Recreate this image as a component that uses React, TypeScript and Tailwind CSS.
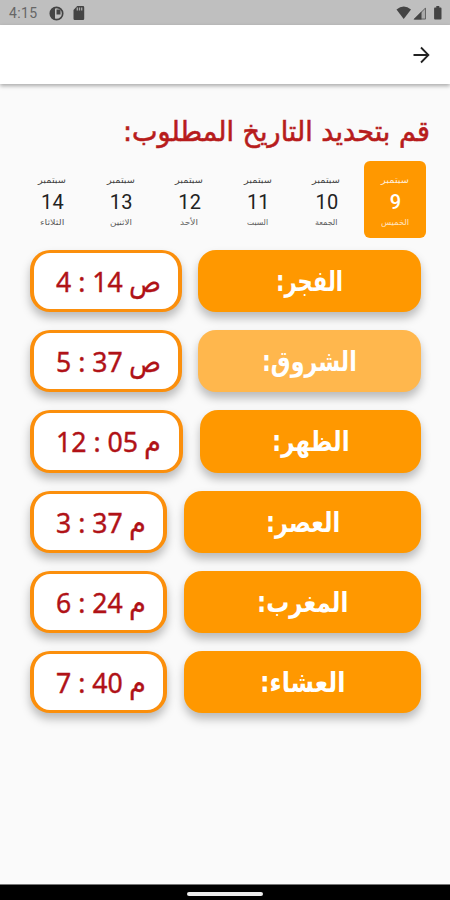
import { useLayoutEffect, useRef, useState } from "react";

type FitProps = { text: string; width: number; className?: string; dir?: "rtl" | "ltr" };

// Stretches one line of text horizontally so that it fills the given width.
function Fit({ text, width, className = "", dir = "rtl" }: FitProps) {
  const ref = useRef<HTMLSpanElement>(null);
  const [scale, setScale] = useState(1);
  useLayoutEffect(() => {
    if (ref.current) setScale(width / ref.current.offsetWidth);
  }, [text, width]);
  return (
    <span dir="ltr" className={`block whitespace-nowrap ${className}`} style={{ width }}>
      <span ref={ref} dir={dir} className="inline-block origin-left" style={{ transform: `scaleX(${scale})` }}>
        {text}
      </span>
    </span>
  );
}

const days = [
  { n: "9", name: "الخميس", w: 28 },
  { n: "10", name: "الجمعة", w: 23 },
  { n: "11", name: "السبت", w: 21 },
  { n: "12", name: "الأحد", w: 18 },
  { n: "13", name: "الاثنين", w: 22 },
  { n: "14", name: "الثلاثاء", w: 24 },
];

const prayers = [
  { name: "الفجر:", w: 67, time: "4 : 14", tw: 67, half: "ص", hw: 32, box: "w-[152px]", label: "w-[223px] bg-[#ff9800]" },
  { name: "الشروق:", w: 95, time: "5 : 37", tw: 67, half: "ص", hw: 32, box: "w-[152px]", label: "w-[223px] bg-[#ffb74d]" },
  { name: "الظهر:", w: 78, time: "12 : 05", tw: 82, half: "م", hw: 17, box: "w-[153px]", label: "w-[221px] bg-[#ff9800]" },
  { name: "العصر:", w: 74, time: "3 : 37", tw: 67, half: "م", hw: 17, box: "w-[137px]", label: "w-[237px] bg-[#ff9800]" },
  { name: "المغرب:", w: 91, time: "6 : 24", tw: 67, half: "م", hw: 17, box: "w-[137px]", label: "w-[237px] bg-[#ff9800]" },
  { name: "العشاء:", w: 85, time: "7 : 40", tw: 67, half: "م", hw: 17, box: "w-[137px]", label: "w-[237px] bg-[#ff9800]" },
];

function StatusBar() {
  return (
    <div className="flex h-[25px] items-center bg-[#bfbfbf] pr-[7px] pl-[9px]">
      <span className="w-[29px] pt-[2px] font-[Roboto,sans-serif] text-[14px] tracking-[0.4px] text-[#666]">4:15</span>
      <svg className="mt-px ml-[11px] h-[15px] w-[15px]" viewBox="0 0 15 15">
        <circle cx="7.5" cy="7.5" r="6.2" fill="none" stroke="#444" strokeWidth="1.7" />
        <path d="M2 3.500L6 1.500v12L2 11z" fill="#444" />
        <path d="M7.500 3.500h4v5h-4z" fill="#444" />
      </svg>
      <svg className="mt-px ml-[9px] h-[14px] w-[12px]" viewBox="0 0 12 14">
        <path d="M4.200 0H10a1.200 1.200 0 0 1 1.200 1.200v11.600A1.200 1.200 0 0 1 10 14H1.700A1.200 1.200 0 0 1 .5 12.800V4z" fill="#444" />
        <path d="M4.300 1.500v3M6.500 1.500v3M8.700 1.500v3" stroke="#aaa" strokeWidth="1.300" />
      </svg>
      <svg className="ml-auto h-[14px] w-[47px]" viewBox="0 0 47 14">
        <path d="M0.500 3.500Q7.700-2.500 15 3.500L7.700 13z" fill="#444" />
        <path d="M17.500 13.500L30 1v12.500z" fill="#aaa" />
        <path d="M18.500 13L29.500 2v11z" fill="none" stroke="#666" />
        <path d="M17.500 13.500L25.500 5.500v8z" fill="#444" />
        <path d="M38.500 1.500h1.800V0h3v1.500h1.300q.9 0 .9.900v10.200q0 .9-.9.900h-5.600q-.9 0-.9-.9V2.400z" fill="#444" />
      </svg>
    </div>
  );
}

export default function App() {
  return (
    <div className="flex h-[900px] w-[450px] flex-col overflow-hidden bg-[#fafafa] font-['DejaVu_Sans',sans-serif]">
      <StatusBar />
      <header className="flex h-[59px] shrink-0 items-center justify-end bg-white pr-[20px] shadow-[0_2px_4px_rgba(0,0,0,0.32)]">
        <svg className="h-[18px] w-[18px]" viewBox="0 0 18 18" fill="none" stroke="#222" strokeWidth="1.8">
          <path d="M1.500 9h15M9 1.500L16.400 9L9 16.500" />
        </svg>
      </header>

      <main dir="rtl" className="flex-1">
        <h1 className="flex h-[77px] pt-[29px] pr-[20px] text-[28px] leading-[38px] text-[#b71c1c]">
          <Fit text="قم بتحديد التاريخ المطلوب:" width={307} className="[-webkit-text-stroke:0.6px_#b71c1c]" />
        </h1>

        <div className="flex gap-[6.600px] pr-[24px]">
          {days.map((d, i) => (
            <div
              key={d.n}
              className={`flex h-[77px] w-[62px] shrink-0 flex-col items-center rounded-[6px] pt-[11px] ${
                i === 0 ? "bg-[#ff9800] text-white" : "text-[#222]"
              }`}
            >
              <Fit text="سبتمبر" width={28} className="h-[15px] text-[9px] leading-[16px] opacity-85" />
              <span
                className={`h-[30px] pl-px font-[Roboto,sans-serif] text-[20px] leading-[31px] tracking-[0.2px] ${
                  i === 0 ? "font-medium" : ""
                }`}
              >
                {d.n}
              </span>
              <Fit text={d.name} width={d.w} className="h-[12px] text-[8px] leading-[12px] opacity-75" />
            </div>
          ))}
        </div>

        <div className="mt-[12px] flex flex-col gap-[18px] pr-[29px] pl-[30px]">
          {prayers.map((p) => (
            <div key={p.name} className="flex h-[62.200px] justify-between">
              <div
                className={`flex items-center justify-center rounded-[18px] pt-[2px] text-[28px] leading-[38px] font-bold text-white shadow-[0_6px_10px_rgba(0,0,0,0.26)] ${p.label}`}
              >
                <Fit text={p.name} width={p.w} />
              </div>
              <div
                dir="ltr"
                className={`flex items-center rounded-[20px] border-x-4 border-y-3 border-[#fb8f0c] bg-white pt-[2px] pl-[22px] leading-[38px] text-[#b01217] shadow-[0_6px_10px_rgba(0,0,0,0.26)] ${p.box}`}
              >
                <Fit
                  text={p.time}
                  width={p.tw}
                  dir="ltr"
                  className="font-['Noto_Sans',sans-serif] text-[27px] [-webkit-text-stroke:0.4px_#b01217]"
                />
                <Fit text={p.half} width={p.hw} className="ml-[6px] text-[29px] [-webkit-text-stroke:0.3px_#b01217]" />
              </div>
            </div>
          ))}
        </div>
      </main>

      <footer className="flex h-[16px] shrink-0 items-center justify-center border-t border-[#777] bg-black">
        <div className="mt-[2px] h-[4px] w-[76px] rounded-full bg-[#ededed]" />
      </footer>
    </div>
  );
}
